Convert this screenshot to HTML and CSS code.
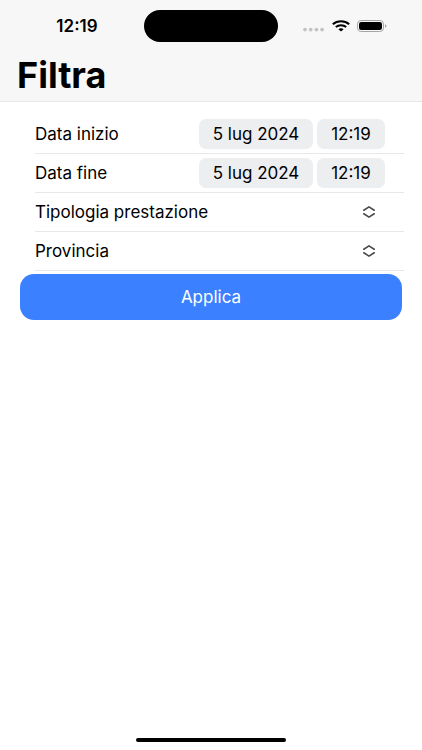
FILE: index.html
```html
<!DOCTYPE html>
<html lang="it">
<head>
    <meta charset="UTF-8">
    <meta name="viewport" content="width=device-width, initial-scale=1.0">
    <title>Filtra</title>
    <link rel="stylesheet" href="styles.css">
</head>
<body>
    <header class="header">
        <div class="status">
            <span class="clock">12:19</span>
            <div class="island"></div>
            <div class="status-icons">
                <svg width="22" height="12" viewBox="0 0 22 12" fill="#c3c3c3">
                    <circle cx="2" cy="9.6" r="1.9"/>
                    <circle cx="7.7" cy="9.6" r="1.9"/>
                    <circle cx="13.4" cy="9.6" r="1.9"/>
                    <circle cx="19.1" cy="9.6" r="1.9"/>
                </svg>
                <svg width="18" height="12" viewBox="0 0 18 12" fill="none" stroke="#000" stroke-width="2">
                    <path d="M.8 4.3C5.3.3 12.7.3 17.2 4.3"/>
                    <path d="M3.8 7.1c2.9-2.5 7.5-2.5 10.4 0"/>
                    <path d="M6.4 9.2c1.5-1.2 3.7-1.2 5.2 0L9 11.5z" fill="#000" stroke="none"/>
                </svg>
                <svg width="30" height="12" viewBox="0 0 30 12">
                    <rect x=".5" y=".5" width="26" height="11" rx="3.6" fill="none" stroke="#a5a5a5"/>
                    <rect x="2" y="2" width="23" height="8" rx="2.3"/>
                    <path d="M28 4.2c2 .6 2 3 0 3.6z" fill="#a5a5a5"/>
                </svg>
            </div>
        </div>
        <h1 class="title">Filtra</h1>
    </header>

    <form class="filters">
        <div class="rows">
            <div class="row">
                <label for="start-date">Data inizio</label>
                <div class="pickers">
                    <input class="pill date" type="text" id="start-date" value="5 lug 2024">
                    <input class="pill time" type="text" value="12:19" aria-label="Ora inizio">
                </div>
            </div>
            <div class="row">
                <label for="end-date">Data fine</label>
                <div class="pickers">
                    <input class="pill date" type="text" id="end-date" value="5 lug 2024">
                    <input class="pill time" type="text" value="12:19" aria-label="Ora fine">
                </div>
            </div>
            <div class="row">
                <label for="service">Tipologia prestazione</label>
                <div class="menu">
                    <select id="service"><option value=""></option></select>
                    <svg class="chevrons" width="12" height="12" viewBox="0 0 12 12">
                        <path d="M.8 4.2L6 .9l5.2 3.3M.8 7.8L6 11.1l5.2-3.3"/>
                    </svg>
                </div>
            </div>
            <div class="row">
                <label for="province">Provincia</label>
                <div class="menu">
                    <select id="province"><option value=""></option></select>
                    <svg class="chevrons" width="12" height="12" viewBox="0 0 12 12">
                        <path d="M.8 4.2L6 .9l5.2 3.3M.8 7.8L6 11.1l5.2-3.3"/>
                    </svg>
                </div>
            </div>
        </div>
        <button class="apply" type="button">Applica</button>
    </form>

    <div class="home-bar"></div>
</body>
</html>
```
FILE: styles.css
```css
:root {
    --bar: #f7f7f7;
    --line: #e8e8e9;
    --pill: #edeef0;
    --blue: #3a80ff;
}
* {
    box-sizing: border-box;
}
body {
    display: flex;
    flex-direction: column;
    min-height: 100vh;
    margin: 0;
    background: #fff;
    color: #000;
    font-family: Inter, "Liberation Sans", sans-serif;
    font-size: 17px;
    line-height: 20px;
}
.header {
    background: var(--bar);
    border-bottom: 1px solid var(--line);
}
.status {
    display: grid;
    grid-template-columns: 1fr auto 1fr;
    align-items: center;
    padding-top: 10px;
}
.clock {
    padding-left: 10px;
    text-align: center;
    font-weight: 600;
}
.island {
    width: 134px;
    height: 32px;
    border-radius: 16px;
    background: #000;
}
.status-icons {
    display: flex;
    justify-content: center;
    gap: 7px;
    padding-right: 10px;
}
.title {
    margin: 0;
    padding: 13px 17px 6px;
    font-size: 36px;
    line-height: 40px;
    font-weight: 700;
}
.filters {
    padding: 13px 20px 0;
}
.rows {
    margin-right: -2px;
    padding-left: 15px;
}
.row {
    display: flex;
    justify-content: space-between;
    align-items: center;
    height: 39px;
    padding-right: 19px;
    border-bottom: 1px solid var(--line);
}
.pickers {
    display: flex;
    gap: 4px;
}
.pill {
    height: 30px;
    padding: 0;
    border: none;
    border-radius: 7px;
    background: var(--pill);
    color: inherit;
    font: inherit;
    text-align: center;
}
.date { width: 114px; }
.time { width: 68px; }
.menu {
    display: grid;
    place-items: center;
}
.menu select,
.chevrons {
    grid-area: 1 / 1;
}
.menu select {
    width: 32px;
    height: 30px;
    border: none;
    background: none;
    appearance: none;
}
.chevrons {
    fill: none;
    stroke: #4a4a4a;
    stroke-width: 1.6;
    stroke-linecap: round;
    stroke-linejoin: round;
    pointer-events: none;
}
.apply {
    display: block;
    width: 100%;
    height: 46px;
    margin-top: 3px;
    border: none;
    border-radius: 14px;
    background: var(--blue);
    color: #fff;
    font: inherit;
}
.home-bar {
    width: 150px;
    height: 4px;
    margin: auto auto 8px;
    border-radius: 2px;
    background: #000;
}
```
